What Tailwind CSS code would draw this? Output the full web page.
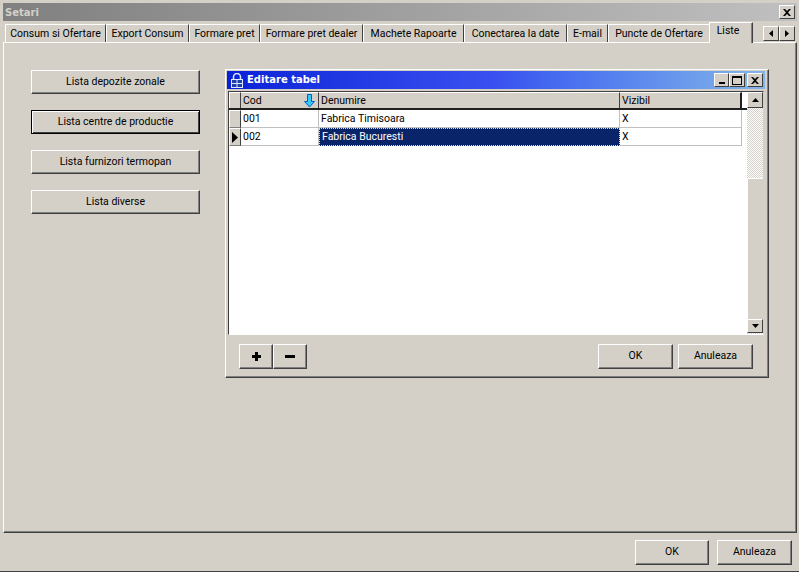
<!DOCTYPE html>
<html lang="ro">
<head>
  <meta charset="UTF-8">
  <meta name="viewport" content="width=device-width, initial-scale=1.0">
  <script src="https://cdn.jsdelivr.net/npm/@tailwindcss/browser@4"></script>
  <title>Setari</title>
</head>
<body class="bg-[#d4d0c8] overflow-hidden">
  <div class="w-[799px] h-[572px] flex flex-col bg-[#d4d0c8] pt-[3px] pl-[3px] pr-[2px] border-b border-b-[#404040] font-['Roboto',sans-serif] text-[10.5px] leading-none text-black whitespace-nowrap">

    <!-- Title bar -->
    <div class="h-[18px] shrink-0 flex items-center justify-between pl-[2px] pr-[2px] bg-gradient-to-r from-[#808080] to-[#c0c0c0]">
      <span class="pt-[1px] font-['DejaVu_Sans',sans-serif] font-bold text-[10px] text-[#d4d0c8]">Setari</span>
      <button class="w-[16px] h-[14px] flex items-center justify-center bg-[#d4d0c8] border-t border-l border-t-white border-l-white border-r border-b border-r-[#404040] border-b-[#404040]">
        <svg width="8" height="7" viewBox="0 0 8 7"><path d="M0 0h2l2 2 2-2h2L5 3.500 8 7H6L4 5 2 7H0l3-3.500z" fill="#000"/></svg>
      </button>
    </div>

    <!-- Tabs -->
    <div class="h-[21px] shrink-0 flex items-end pl-[2px] relative z-10">
      <div class="h-[18px] w-[101px] shrink-0 pt-[1px] flex items-center justify-center border-l border-l-white border-t border-t-white border-r border-r-[#404040]">Consum si Ofertare</div>
      <div class="h-[18px] w-[83px] shrink-0 pt-[1px] flex items-center justify-center border-l border-l-white border-t border-t-white border-r border-r-[#404040]">Export Consum</div>
      <div class="h-[18px] w-[71px] shrink-0 pt-[1px] flex items-center justify-center border-l border-l-white border-t border-t-white border-r border-r-[#404040]">Formare pret</div>
      <div class="h-[18px] w-[103px] shrink-0 pt-[1px] flex items-center justify-center border-l border-l-white border-t border-t-white border-r border-r-[#404040]">Formare pret dealer</div>
      <div class="h-[18px] w-[101px] shrink-0 pt-[1px] flex items-center justify-center border-l border-l-white border-t border-t-white border-r border-r-[#404040]">Machete Rapoarte</div>
      <div class="h-[18px] w-[103px] shrink-0 pt-[1px] flex items-center justify-center border-l border-l-white border-t border-t-white border-r border-r-[#404040]">Conectarea la date</div>
      <div class="h-[18px] w-[41px] shrink-0 pt-[1px] flex items-center justify-center border-l border-l-white border-t border-t-white border-r border-r-[#404040]">E-mail</div>
      <div class="h-[18px] w-[101px] shrink-0 pt-[1px] flex items-center justify-center border-l border-l-white border-t border-t-white">Puncte de Ofertare</div>
      <div class="h-[21px] w-[44px] shrink-0 mb-[-1px] pb-[4px] pr-[6px] flex items-center justify-center bg-[#d4d0c8] border-l border-l-white border-t border-t-white border-r border-r-[#404040] shadow-[inset_-1px_0_0_#808080]">Liste</div>
      <div class="ml-[10px] mb-[1px] flex">
        <button class="w-[16px] h-[15px] flex items-center justify-center border border-t-white border-l-white border-r-[#404040] border-b-[#404040]">
          <svg width="4" height="7" viewBox="0 0 4 7"><path d="M4 0v7L0 3.500z" fill="#000"/></svg>
        </button>
        <button class="w-[16px] h-[15px] flex items-center justify-center border border-t-white border-l-white border-r-[#404040] border-b-[#404040]">
          <svg width="4" height="7" viewBox="0 0 4 7"><path d="M0 0v7l4-3.500z" fill="#000"/></svg>
        </button>
      </div>
    </div>

    <!-- Tab page -->
    <div class="h-[491px] shrink-0 flex items-start pt-[26px] pl-[27px] border-t border-t-white border-l border-l-white border-r border-r-[#404040] border-b border-b-[#404040] shadow-[inset_-1px_-1px_0_#808080]">
      <div class="w-[169px] mt-[1px] flex flex-col gap-[16px]">
        <button class="h-[24px] flex items-center justify-center bg-[#d4d0c8] border border-t-white border-l-white border-r-[#404040] border-b-[#404040] shadow-[inset_-1px_-1px_0_#808080]">Lista depozite zonale</button>
        <button class="h-[24px] flex items-center justify-center bg-[#d4d0c8] border border-black shadow-[inset_1px_1px_0_#ffffff,inset_-1px_-1px_0_#404040]">Lista centre de productie</button>
        <button class="h-[24px] flex items-center justify-center bg-[#d4d0c8] border border-t-white border-l-white border-r-[#404040] border-b-[#404040] shadow-[inset_-1px_-1px_0_#808080]">Lista furnizori termopan</button>
        <button class="h-[24px] flex items-center justify-center bg-[#d4d0c8] border border-t-white border-l-white border-r-[#404040] border-b-[#404040] shadow-[inset_-1px_-1px_0_#808080]">Lista diverse</button>
      </div>

      <!-- Editare tabel window -->
      <div class="ml-[25px] w-[544px] h-[309px] p-[1px] flex flex-col bg-[#d4d0c8] border border-t-white border-l-white border-r-[#404040] border-b-[#404040] shadow-[inset_-1px_-1px_0_#808080]">
        <div class="h-[18px] w-[538px] shrink-0 flex items-center justify-between pl-[4px] pr-[2px] bg-gradient-to-r from-[#0a20d8] via-[#3a50f0] to-[#86b4e8]">
          <div class="flex items-center gap-[4px]">
            <svg width="12" height="15" viewBox="0 0 12 15"><path d="M2.500 7V4a3.500 3.500 0 0 1 7 0v3" fill="none" stroke="#dfe8ff" stroke-width="1.500"/><rect x="0.500" y="6.500" width="11" height="8" fill="#1d3fa8" stroke="#dfe8ff"/><path d="M6 7v7M1 10.500h10" stroke="#dfe8ff"/></svg>
            <span class="font-['DejaVu_Sans',sans-serif] font-bold text-[10px] text-white">Editare tabel</span>
          </div>
          <div class="flex items-center">
            <button class="w-[15px] h-[14px] flex items-end justify-center pb-[2px] bg-[#d4d0c8] border border-t-white border-l-white border-r-[#404040] border-b-[#404040]"><span class="w-[6px] h-[2px] bg-black"></span></button>
            <button class="w-[16px] h-[14px] flex items-center justify-center bg-[#d4d0c8] border border-t-white border-l-white border-r-[#404040] border-b-[#404040]"><span class="w-[10px] h-[9px] border border-t-2 border-black"></span></button>
            <button class="ml-[2px] w-[16px] h-[14px] flex items-center justify-center bg-[#d4d0c8] border border-t-white border-l-white border-r-[#404040] border-b-[#404040]">
              <svg width="8" height="7" viewBox="0 0 8 7"><path d="M0 0h2l2 2 2-2h2L5 3.500 8 7H6L4 5 2 7H0l3-3.500z" fill="#000"/></svg>
            </button>
          </div>
        </div>

        <!-- Grid -->
        <div class="mt-[2px] ml-[1px] w-[536px] h-[244px] shrink-0 flex bg-white border-t border-l border-t-[#404040] border-l-[#404040] border-b border-r border-b-white border-r-[#d4d0c8]">
          <div class="w-[518px] shrink-0 flex flex-col">
            <div class="h-[18px] flex border-b-2 border-b-[#202020]">
              <div class="w-[12px] bg-[#d4d0c8] border-t border-l border-t-white border-l-white border-r border-r-[#404040]"></div>
              <div class="w-[78px] flex items-center justify-between pl-[2px] pr-[3px] bg-[#d4d0c8] border-t border-t-white border-r border-r-[#404040]">
                <span class="pt-[1px]">Cod</span>
                <svg width="11" height="14" viewBox="0 0 11 14"><path d="M3.500 .500h4v7h3L5.500 13 .500 7.500h3z" fill="#35c8ff" stroke="#0060c0"/></svg>
              </div>
              <div class="w-[301px] flex items-center pl-[2px] pt-[1px] bg-[#d4d0c8] border-t border-t-white border-r border-r-[#404040]">Denumire</div>
              <div class="w-[122px] flex items-center pl-[2px] pt-[1px] bg-[#d4d0c8] border-t border-t-white border-r-2 border-r-[#202020]">Vizibil</div>
            </div>
            <div class="h-[18px] flex">
              <div class="w-[12px] bg-[#d4d0c8] border-t border-l border-t-white border-l-white border-r border-b border-r-[#404040] border-b-[#808080]"></div>
              <div class="w-[78px] flex items-center pl-[2px] pt-[1px] border-r border-b border-[#c0c0c0]">001</div>
              <div class="w-[301px] flex items-center pl-[2px] pt-[1px] border-r border-b border-[#c0c0c0]">Fabrica Timisoara</div>
              <div class="w-[122px] flex items-center pl-[2px] pt-[1px] border-r border-b border-[#c0c0c0]">X</div>
            </div>
            <div class="h-[18px] flex">
              <div class="w-[12px] flex items-center justify-center bg-[#d4d0c8] border-t border-l border-t-white border-l-white border-r border-b border-r-[#404040] border-b-[#808080]">
                <svg width="6" height="11" viewBox="0 0 6 11"><path d="M0 0v11l6-5.500z" fill="#000"/></svg>
              </div>
              <div class="w-[78px] flex items-center pl-[2px] pt-[1px] border-r border-b border-[#c0c0c0]">002</div>
              <div class="w-[301px] flex items-center pl-[2px] pt-[1px] bg-[#0a246a] text-white border border-dotted border-[#e8e4a0]">Fabrica Bucuresti</div>
              <div class="w-[122px] flex items-center pl-[2px] pt-[1px] border-r border-b border-[#c0c0c0]">X</div>
            </div>
          </div>

          <!-- Scrollbar -->
          <div class="w-[16px] flex flex-col bg-[repeating-conic-gradient(#d4d0c8_0_25%,#ffffff_0_50%)] bg-[length:2px_2px]">
            <button class="h-[16px] shrink-0 flex items-center justify-center bg-[#d4d0c8] border border-t-white border-l-white border-r-[#404040] border-b-[#404040]">
              <svg width="7" height="4" viewBox="0 0 7 4"><path d="M0 4h7L3.500 0z" fill="#000"/></svg>
            </button>
            <div class="mt-[70px] h-[141px] shrink-0 bg-[#d4d0c8] border-t border-l border-t-white border-l-white"></div>
            <button class="h-[14px] shrink-0 flex items-center justify-center bg-[#d4d0c8] border border-t-white border-l-white border-r-[#404040] border-b-[#404040]">
              <svg width="7" height="4" viewBox="0 0 7 4"><path d="M0 0h7L3.500 4z" fill="#000"/></svg>
            </button>
          </div>
        </div>

        <!-- Window buttons -->
        <div class="mt-[9px] flex items-start pl-[12px] pr-[14px]">
          <button class="w-[34px] h-[25px] flex items-center justify-center bg-[#d4d0c8] border border-t-white border-l-white border-r-[#404040] border-b-[#404040] shadow-[inset_-1px_-1px_0_#808080]">
            <svg width="9" height="9" viewBox="0 0 9 9"><path d="M3 0h3v3h3v3H6v3H3V6H0V3h3z" fill="#000"/></svg>
          </button>
          <button class="w-[34px] h-[25px] flex items-center justify-center bg-[#d4d0c8] border border-t-white border-l-white border-r-[#404040] border-b-[#404040] shadow-[inset_-1px_-1px_0_#808080]">
            <span class="w-[10px] h-[3px] bg-black"></span>
          </button>
          <button class="ml-auto w-[75px] h-[25px] flex items-center justify-center bg-[#d4d0c8] border border-t-white border-l-white border-r-[#404040] border-b-[#404040] shadow-[inset_-1px_-1px_0_#808080]">OK</button>
          <button class="ml-[5px] w-[75px] h-[25px] flex items-center justify-center bg-[#d4d0c8] border border-t-white border-l-white border-r-[#404040] border-b-[#404040] shadow-[inset_-1px_-1px_0_#808080]">Anuleaza</button>
        </div>
      </div>
    </div>

    <!-- Bottom bar -->
    <div class="flex-1 flex items-start justify-end pt-[7px] pr-[5px] gap-[8px]">
      <button class="w-[74px] h-[25px] flex items-center justify-center bg-[#d4d0c8] border border-t-white border-l-white border-r-[#404040] border-b-[#404040] shadow-[inset_-1px_-1px_0_#808080]">OK</button>
      <button class="w-[75px] h-[25px] flex items-center justify-center bg-[#d4d0c8] border border-t-white border-l-white border-r-[#404040] border-b-[#404040] shadow-[inset_-1px_-1px_0_#808080]">Anuleaza</button>
    </div>
  </div>
</body>
</html>
